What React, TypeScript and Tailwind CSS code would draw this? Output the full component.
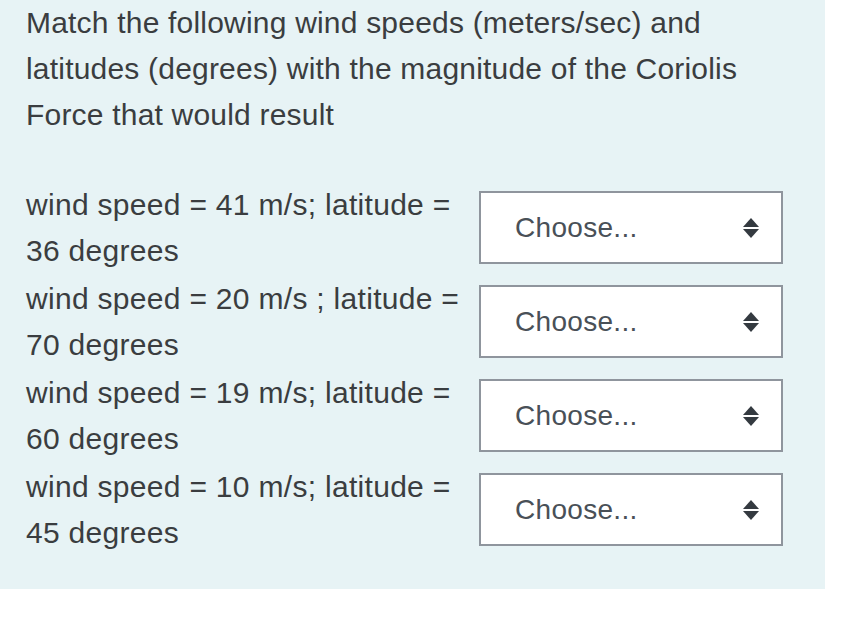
import React from 'react';

const rows = [
  'wind speed = 41 m/s; latitude = 36 degrees',
  'wind speed = 20 m/s ; latitude = 70 degrees',
  'wind speed = 19 m/s; latitude = 60 degrees',
  'wind speed = 10 m/s; latitude = 45 degrees',
];

const SortArrows: React.FC = () => (
  <svg width="16" height="20" viewBox="0 0 16 20" className="text-[#343a40]">
    <path d="M8 0 L16 9 H0 Z" fill="currentColor" />
    <path d="M0 11 H16 L8 20 Z" fill="currentColor" />
  </svg>
);

const App: React.FC = () => {
  return (
    <div className="w-[846px] h-[620px] bg-white" style={{ fontFamily: '"Liberation Sans", Arial, sans-serif' }}>
      <div className="w-[825px] bg-[#e7f3f5] pl-[26px] pb-[33px] text-[#3a3d40] tracking-[0.2px]">
        {/* Question text */}
        <p className="text-[30px] leading-[46px] w-[760px]">
          Match the following wind speeds (meters/sec) and latitudes (degrees) with the magnitude of the Coriolis
          Force that would result
        </p>

        {/* Matching rows */}
        <div className="mt-[44px] flex flex-col gap-[2px]">
          {rows.map((label, i) => (
            <div key={i} className="flex items-start">
              <div className="w-[453px] text-[30px] leading-[46px] tracking-[0.3px]">{label}</div>
              <div className="mt-[9px] w-[304px] h-[73px] bg-white border-2 border-[#8f959d] flex items-center justify-between pl-[34px] pr-[22px]">
                <span className="text-[28px] text-[#495057] tracking-[0.3px]">Choose...</span>
                <SortArrows />
              </div>
            </div>
          ))}
        </div>
      </div>
    </div>
  );
};

export default App;
